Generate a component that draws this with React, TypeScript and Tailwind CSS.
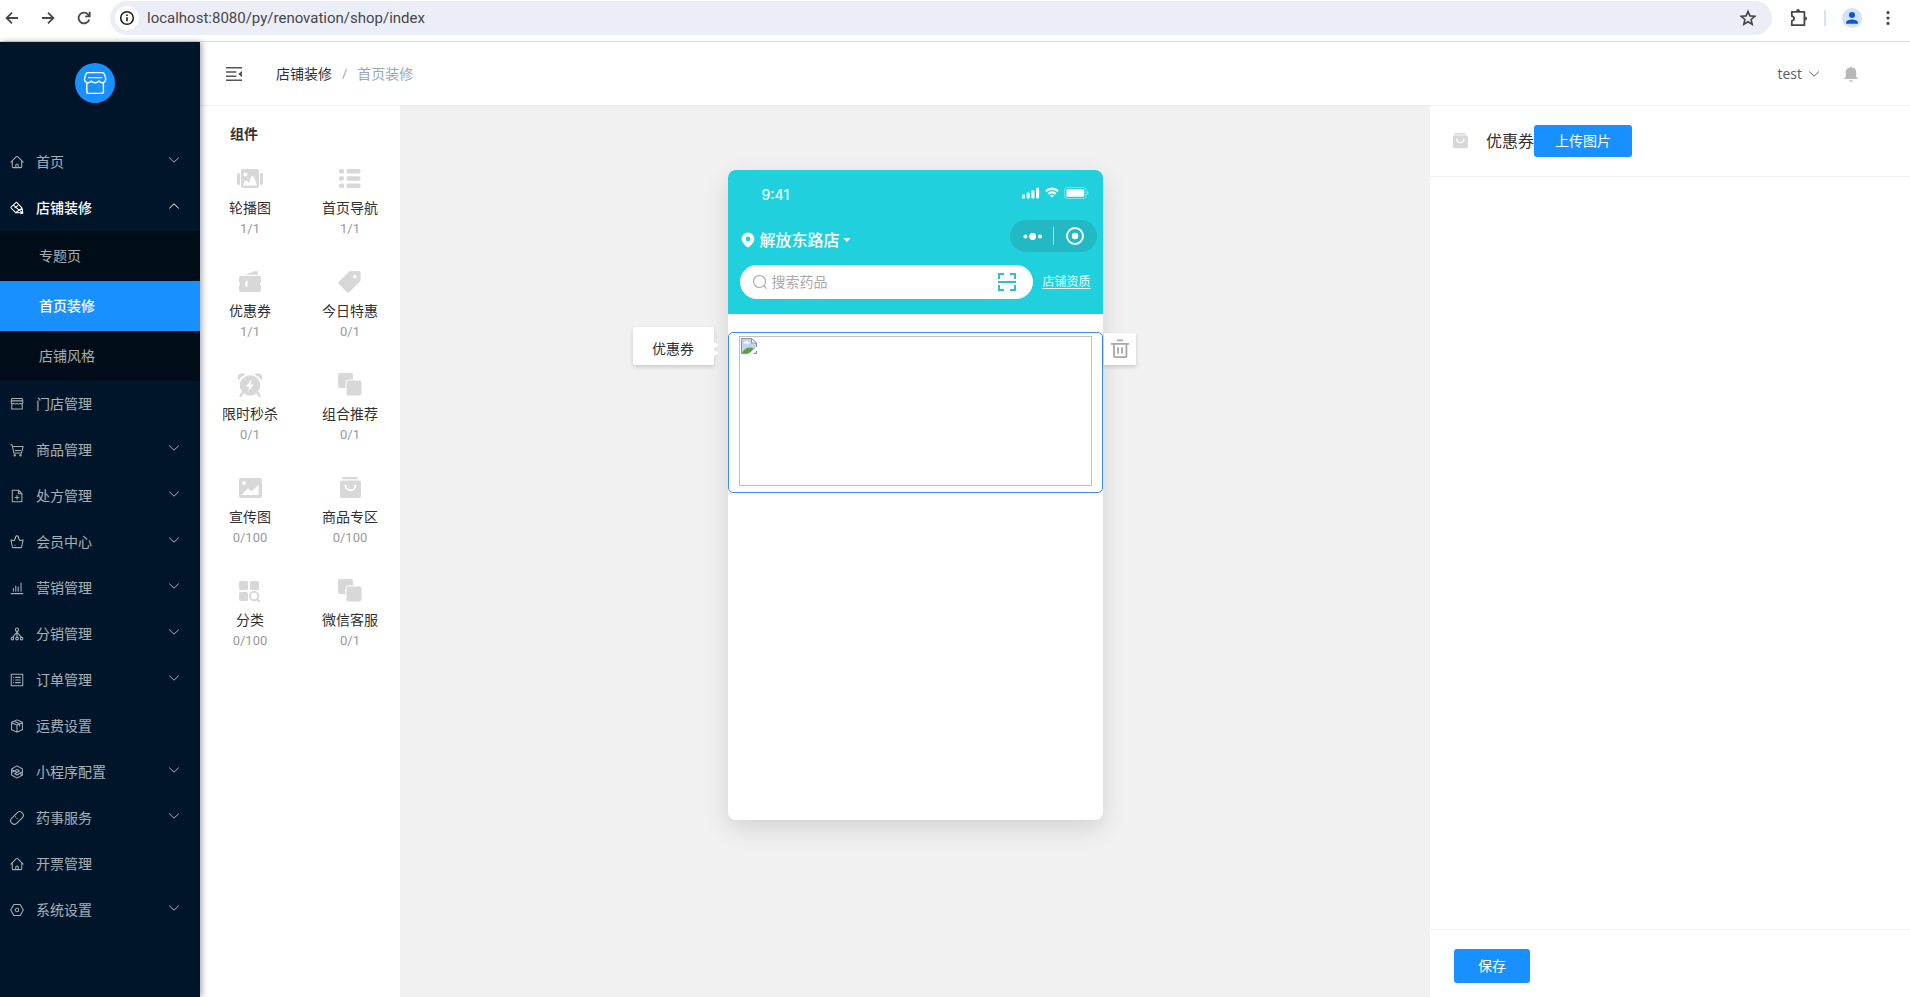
import type { ReactNode } from "react";
import clsx from "clsx";

interface IconProps {
  className?: string;
}

interface LineIconProps extends IconProps {
  children: ReactNode;
}

// 16x16 outline icon used across the sidebar
const LineIcon = ({ className, children }: LineIconProps) => (
  <svg
    viewBox="0 0 16 16"
    fill="none"
    stroke="currentColor"
    strokeWidth="1.2"
    strokeLinecap="round"
    strokeLinejoin="round"
    className={clsx("shrink-0", className ?? "size-[14px]")}
    aria-hidden="true"
  >
    {children}
  </svg>
);

const homeIcon = (
  <LineIcon>
    <path d="M1 8.2 6.9 2.1a1.5 1.5 0 0 1 2.2 0L15 8.2M2.6 7v6.4a1 1 0 0 0 1 1h8.8a1 1 0 0 0 1-1V7M6.6 14.2v-2.6a1.4 1.4 0 0 1 2.8 0v2.6" />
  </LineIcon>
);

const paintIcon = (
  <LineIcon>
    <path d="M7.4 1.4 1.4 6.6a1 1 0 0 0-.1 1.400l5 5.400 7.500-5.200-6.400-6.800ZM4 4.600l6.600 6.200M5.800 7.600l3-2.400M6.300 13.400h6.500M13.800 8.200l.9 5.600M12 11.400l2.700 2.600-2.200.4" />
  </LineIcon>
);

const storeIcon = (
  <LineIcon>
    <path d="M2.4 1.600h11.200M1.400 4.400h13.200M2.400 1.600 1.400 4.400v2.200c0 1.500 2 1.600 3 .6 1 1 2.600 1 3.600 0 1 1 2.600 1 3.600 0 1 1 3 .9 3-.6V4.400l-1-2.800M2 8.600v5.200h12V8.600" />
  </LineIcon>
);

const cartIcon = (
  <LineIcon>
    <path d="M.8 2h1.600l2 9.400h8.800L15 4H3M6 8.600h6" />
    <circle cx="5.4" cy="14" r=".8" />
    <circle cx="12" cy="14" r=".8" />
  </LineIcon>
);

const fileIcon = (
  <LineIcon>
    <path d="M2.6 1.4h7.2l3.800 3.800v9.400h-11V1.400ZM9.600 1.600v3.800h3.800M8 7.400v4.400M5.800 9.600h4.400" />
  </LineIcon>
);

const crownIcon = (
  <LineIcon>
    <path d="m1 5.600 3.600.8L6.400 3.600a1.800 1.800 0 1 1 3.200 0l1.800 2.800 3.600-.8-1.800 8.200a.8.800 0 0 1-.8.6H3.600a.8.800 0 0 1-.8-.6L1 5.600ZM5.600 11.400h.2" />
  </LineIcon>
);

const chartIcon = (
  <LineIcon>
    <path d="M1.200 14.400h13.600M3.800 11.600V8.400M6.600 11.600V5.600M9.400 11.600V6.800M12.600 11.600V2.400" />
  </LineIcon>
);

const networkIcon = (
  <LineIcon>
    <circle cx="8" cy="3" r="1.9" />
    <circle cx="2.8" cy="13.2" r="1.5" />
    <circle cx="8" cy="13.2" r="1.5" />
    <circle cx="13.2" cy="13.2" r="1.5" />
    <path d="M8 5v6.600M7.600 6.400 3.200 11.600M8.400 6.400l4.400 5.200" />
  </LineIcon>
);

const listIcon = (
  <LineIcon>
    <path d="M1.400 1.400h13.200v13.200H1.400zM6.400 5h5.400M6.400 8h5.400M6.400 11h5.400M4.200 5h.1M4.200 8h.1M4.200 11h.1" />
  </LineIcon>
);

const boxIcon = (
  <LineIcon>
    <path d="m8 1 6.200 2.800v8.400L8 15l-6.200-2.800V3.800L8 1ZM1.800 4.200 8 6.800l6.200-2.600M8 6.800V15M4.800 2.600l6.200 2.800v2.600" />
  </LineIcon>
);

const miniAppIcon = (
  <LineIcon>
    <path d="m8 1 6.200 3.500v7L8 15l-6.200-3.500v-7L8 1ZM2 8.600 8 5l2.800 1.800L5.400 10 8 11.400l6-3.600M5 6.600 8 8.200M2.200 5.400l3 1.400M11 9.400l2.600 1.400" />
  </LineIcon>
);

const pillIcon = (
  <LineIcon>
    <rect x="-.4" y="3.9" width="16.8" height="8.2" rx="4.1" transform="rotate(-45 8 8)" />
    <path d="m6.200 6.600.2.200M8 8.400l.2.200" />
  </LineIcon>
);

const settingIcon = (
  <LineIcon>
    <path d="M4.400 1.800h7.200L15.200 8l-3.600 6.200H4.400L.8 8l3.600-6.200Z" />
    <circle cx="8" cy="8" r="2" />
  </LineIcon>
);

const Chevron = ({ className }: IconProps) => (
  <svg viewBox="0 0 12 12" fill="none" stroke="currentColor" className={className} aria-hidden="true">
    <path d="m1.200 3.600 4.800 4.600 4.800-4.600" />
  </svg>
);

const CarouselIcon = () => (
  <svg viewBox="0 0 28 28" className="size-7" fill="currentColor" aria-hidden="true">
    <rect x="1" y="8" width="3" height="12" rx="1.4" />
    <rect x="24" y="8" width="3" height="12" rx="1.4" />
    <rect x="5" y="4" width="18" height="19" rx="2" />
    <circle cx="9.4" cy="9.6" r="2" fill="#fff" />
    <path d="M7 20.600c1-3.600 2.400-5.400 3.600-5.200 1.200.3 1.200 2.400 2.200 2.200 1.400-.4 1.600-6.600 3.400-6.600 1.800 0 2.800 4 4.800 9.600Z" fill="#fff" />
  </svg>
);

const NavIcon = () => (
  <svg viewBox="0 0 28 28" className="size-7" fill="currentColor" aria-hidden="true">
    <rect x="3" y="4" width="5" height="4.4" rx="1.6" />
    <rect x="3" y="11.3" width="5" height="4.4" rx="1.6" />
    <rect x="3" y="18.6" width="5" height="4.4" rx="1.6" />
    <rect x="10.5" y="4" width="14" height="4.4" rx="1.6" />
    <rect x="10.5" y="11.3" width="14" height="4.4" rx="1.6" />
    <rect x="10.5" y="18.6" width="14" height="4.4" rx="1.6" />
  </svg>
);

const CouponIcon = () => (
  <svg viewBox="0 0 28 28" className="size-7" fill="currentColor" aria-hidden="true">
    <path d="M8.400 6.800 19.600 3a1.600 1.600 0 0 1 2 1.200l.6 2.600H8.400Z" />
    <path d="M5 8h18a2 2 0 0 1 2 2v4a1.900 1.900 0 0 0 0 3.400V22a2 2 0 0 1-2 2H5a2 2 0 0 1-2-2v-4.600a1.900 1.900 0 0 0 0-3.400V10a2 2 0 0 1 2-2Z" />
    <rect x="9.4" y="12.8" width="2.2" height="6" rx="1" fill="#fff" />
  </svg>
);

const TagIcon = () => (
  <svg viewBox="0 0 28 28" className="size-7" fill="currentColor" aria-hidden="true">
    <path d="M14.600 3H23a1.600 1.600 0 0 1 1.600 1.600V12a2 2 0 0 1-.6 1.400L13.200 24.200a1.600 1.600 0 0 1-2.200 0L2.800 16a1.600 1.600 0 0 1 0-2.200L13.200 3.600a2 2 0 0 1 1.400-.6Z" />
    <circle cx="18.8" cy="8.6" r="1.9" fill="#fff" />
  </svg>
);

const AlarmIcon = () => (
  <svg viewBox="0 0 28 28" className="size-7" fill="currentColor" aria-hidden="true">
    <path d="M2.700 9.200a4.200 4.200 0 0 1 6.800-5.400A12 12 0 0 0 2.700 9.200ZM25.300 9.200a4.200 4.200 0 0 0-6.800-5.400 12 12 0 0 1 6.800 5.400Z" />
    <circle cx="14" cy="14.4" r="10.2" />
    <path d="m6.600 21.600-2 3.200M21.400 21.600l2 3.200" stroke="currentColor" strokeWidth="2.6" strokeLinecap="round" />
    <path d="M15.400 8.400 9.800 15.800h3.400l-1 4.800 5.600-7.200h-3.400l1-5Z" fill="#fff" />
  </svg>
);

const LayersIcon = () => (
  <svg viewBox="0 0 28 28" className="size-7" fill="currentColor" aria-hidden="true">
    <rect x="2" y="2" width="15" height="15" rx="2" />
    <rect x="10" y="9" width="16" height="16" rx="2.4" stroke="#fff" />
  </svg>
);

const PosterIcon = () => (
  <svg viewBox="0 0 28 28" className="size-7" fill="currentColor" aria-hidden="true">
    <rect x="3" y="4" width="23" height="20" rx="2" />
    <circle cx="8" cy="9" r="1.9" fill="#fff" />
    <path d="m6 20.600 6-6.400 3.600 3.400L22.600 10.400V20a1 1 0 0 1-1 1H6.200Z" fill="#fff" />
  </svg>
);

const BagIcon = ({ className }: IconProps) => (
  <svg viewBox="0 0 28 28" className={className ?? "size-7"} fill="currentColor" aria-hidden="true">
    <path d="M7.600 3h13a1.400 1.400 0 0 1 1.400 1.400v.8H6v-.8A1.400 1.400 0 0 1 7.600 3Z" />
    <rect x="4" y="6.4" width="21" height="17.6" rx="2" />
    <path d="M9.600 11.400a4.900 4.900 0 0 0 9.800 0" stroke="#fff" strokeWidth="2" strokeLinecap="round" fill="none" />
  </svg>
);

const CategoryIcon = () => (
  <svg viewBox="0 0 28 28" className="size-7" fill="currentColor" aria-hidden="true">
    <rect x="3" y="4" width="9" height="9" rx="1.6" />
    <rect x="14" y="4" width="9" height="9" rx="1.6" />
    <rect x="3" y="15" width="9" height="9" rx="1.6" />
    <circle cx="18.2" cy="19" r="4.2" fill="none" stroke="currentColor" strokeWidth="1.9" />
    <path d="m21.200 22.200 2.200 2.200" stroke="currentColor" strokeWidth="2" strokeLinecap="round" />
  </svg>
);

interface MenuItem {
  title: string;
  icon: ReactNode;
  expandable?: boolean;
  children?: string[];
}

const menu: MenuItem[] = [
  { title: "首页", icon: homeIcon, expandable: true },
  { title: "店铺装修", icon: paintIcon, expandable: true, children: ["专题页", "首页装修", "店铺风格"] },
  { title: "门店管理", icon: storeIcon },
  { title: "商品管理", icon: cartIcon, expandable: true },
  { title: "处方管理", icon: fileIcon, expandable: true },
  { title: "会员中心", icon: crownIcon, expandable: true },
  { title: "营销管理", icon: chartIcon, expandable: true },
  { title: "分销管理", icon: networkIcon, expandable: true },
  { title: "订单管理", icon: listIcon, expandable: true },
  { title: "运费设置", icon: boxIcon },
  { title: "小程序配置", icon: miniAppIcon, expandable: true },
  { title: "药事服务", icon: pillIcon, expandable: true },
  { title: "开票管理", icon: homeIcon },
  { title: "系统设置", icon: settingIcon, expandable: true },
];

const widgets = [
  { name: "轮播图", count: "1/1", icon: <CarouselIcon /> },
  { name: "首页导航", count: "1/1", icon: <NavIcon /> },
  { name: "优惠券", count: "1/1", icon: <CouponIcon /> },
  { name: "今日特惠", count: "0/1", icon: <TagIcon /> },
  { name: "限时秒杀", count: "0/1", icon: <AlarmIcon /> },
  { name: "组合推荐", count: "0/1", icon: <LayersIcon /> },
  { name: "宣传图", count: "0/100", icon: <PosterIcon /> },
  { name: "商品专区", count: "0/100", icon: <BagIcon /> },
  { name: "分类", count: "0/100", icon: <CategoryIcon /> },
  { name: "微信客服", count: "0/1", icon: <LayersIcon /> },
];

const BrowserBar = () => (
  <div className="flex h-[42px] shrink-0 items-start border-b border-[#dcdcdc] bg-white pt-px text-[#474747]">
    <div className="flex h-[34px] items-center gap-4 pl-0.5 pr-4">
      <button type="button" aria-label="Back" className="flex size-5 items-center justify-center">
        <svg viewBox="0 0 14 14" className="size-[14px]" fill="none" stroke="currentColor" strokeWidth="1.8">
          <path d="M13 7H2M7 1.600 1.600 7 7 12.400" />
        </svg>
      </button>
      <button type="button" aria-label="Forward" className="flex size-5 items-center justify-center">
        <svg viewBox="0 0 14 14" className="size-[14px]" fill="none" stroke="currentColor" strokeWidth="1.8">
          <path d="M1 7h11M7 1.600 12.400 7 7 12.400" />
        </svg>
      </button>
      <button type="button" aria-label="Reload" className="flex size-5 items-center justify-center">
        <svg viewBox="0 0 14 14" className="size-[14px]" fill="none" stroke="currentColor" strokeWidth="1.8">
          <path d="M12.200 8.400A5.400 5.400 0 1 1 11 3.400l1.600 1.600" />
          <path d="M12.700.8v4.600H8.200" />
        </svg>
      </button>
    </div>
    <div className="flex h-[34px] flex-1 items-center rounded-full bg-[#ebeef7] pl-[5px] pr-[14px]">
      <span className="flex size-6 items-center justify-center rounded-full bg-white">
        <svg viewBox="0 0 16 16" className="size-4" fill="none" stroke="#1f1f1f" strokeWidth="1.6" aria-hidden="true">
          <circle cx="8" cy="8" r="6.3" />
          <path d="M8 7.200v4M8 4.400v1.600" />
        </svg>
      </span>
      <input
        aria-label="Address"
        defaultValue="localhost:8080/py/renovation/shop/index"
        className="ml-2 h-6 flex-1 bg-transparent font-['Roboto',sans-serif] text-[15px] leading-6 text-[#474747] outline-none"
      />
      <button type="button" aria-label="Bookmark" className="flex size-5 items-center justify-center">
        <svg viewBox="0 0 18 18" className="size-[18px]" fill="none" stroke="currentColor" strokeWidth="1.6">
          <path d="m9 2.400 1.900 4.500 4.900.4-3.700 3.200 1.100 4.800L9 12.700l-4.200 2.600 1.100-4.800-3.700-3.200 4.900-.4L9 2.400Z" />
        </svg>
      </button>
    </div>
    <div className="flex h-[34px] items-center pl-[17px] pr-3">
      <button type="button" aria-label="Extensions" className="flex size-5 items-center justify-center">
        <svg viewBox="0 0 20 20" className="size-5" fill="none" stroke="currentColor" strokeWidth="1.8">
          <path d="M2.800 3.800h12.600v13.400H2.800v-4.400c3-.4 3-4.200 0-4.600V3.800Z" strokeLinejoin="round" />
          <path d="M7.200 3a1.900 1.900 0 0 1 3.800 0ZM16.200 8.600a1.900 1.900 0 0 1 0 3.800Z" fill="currentColor" stroke="none" />
        </svg>
      </button>
      <span className="ml-[15px] h-4 w-0.5 bg-[#d3e3fd]" />
      <button type="button" aria-label="Profile" className="ml-4 size-5">
        <svg viewBox="0 0 20 20" className="size-5">
          <circle cx="10" cy="10" r="10" fill="#d3e3fd" />
          <circle cx="10" cy="7" r="3" fill="#0b57d0" />
          <path d="M4 15.800v-1.200c0-2 3.600-3.200 6-3.200s6 1.200 6 3.200v1.200H4Z" fill="#0b57d0" />
        </svg>
      </button>
      <button type="button" aria-label="Menu" className="ml-4 flex size-5 items-center justify-center">
        <svg viewBox="0 0 4 16" className="h-4 w-1" fill="currentColor">
          <circle cx="2" cy="2.6" r="1.6" />
          <circle cx="2" cy="8" r="1.6" />
          <circle cx="2" cy="13.4" r="1.6" />
        </svg>
      </button>
    </div>
  </div>
);

const Sidebar = () => (
  <aside className="z-10 w-[200px] shrink-0 overflow-hidden bg-[#001529] shadow-[2px_0_6px_rgba(0,21,41,0.35)]">
    <div className="flex h-[97px] pl-[75px] pt-[21px]">
      <svg viewBox="0 0 40 40" className="size-10" fill="none" stroke="#fff" strokeWidth="1.4" strokeLinejoin="round">
        <circle cx="20" cy="20" r="20" fill="#1890ff" stroke="none" />
        <path d="M13 9.600h14c1.400 0 2.200.7 2.600 2l.9 3.200c.7 2.900-.8 5-3.100 5-1.500 0-2.700-.7-3.500-1.800-.9 1.200-2.200 1.800-3.700 1.800s-2.900-.6-3.800-1.800c-.8 1.100-2 1.800-3.500 1.800-2.400 0-4-2.200-3.200-5l1-3.200c.4-1.300 1-2 2.300-2Z" />
        <path d="M13.600 14.600h13M11.800 20.400v8a2 2 0 0 0 2 2h12.600a2 2 0 0 0 2-2v-8" strokeLinecap="round" />
      </svg>
    </div>
    <nav className="text-sm text-white/65">
      {menu.map((item) => (
        <div key={item.title}>
          <button
            type="button"
            className={clsx(
              "flex h-[46px] w-full items-center gap-3 pl-[10px] pr-5 text-left",
              item.children && "font-medium text-white",
            )}
          >
            {item.icon}
            <span className="flex-1">{item.title}</span>
            {item.expandable && (
              <Chevron className={clsx("mb-1 size-3", item.children && "rotate-180")} />
            )}
          </button>
          {item.children && (
            <div className="bg-[#000c17]">
              {item.children.map((child) => (
                <a
                  key={child}
                  href="#"
                  className={clsx(
                    "flex h-[50px] items-center pl-[39px]",
                    child === "首页装修" && "bg-[#1890ff] font-medium text-white",
                  )}
                >
                  {child}
                </a>
              ))}
            </div>
          )}
        </div>
      ))}
    </nav>
  </aside>
);

const TopBar = () => (
  <header className="flex h-16 shrink-0 items-center border-b border-[#f0f0f0] bg-white pl-[26px] pr-[52px] text-sm">
    <button type="button" aria-label="收起菜单" className="text-[#555]">
      <svg viewBox="0 0 16 14" className="h-[14px] w-4" fill="none" stroke="currentColor" strokeWidth="1.4">
        <path d="M0 .8h16M0 5h10.400M0 9.200h10.400M0 13.300h16" />
        <path d="M16 4v6.200L12.200 7 16 4Z" fill="currentColor" stroke="none" />
      </svg>
    </button>
    <nav className="ml-[34px] flex items-center gap-[10px]">
      <a href="#" className="text-[#303133]">店铺装修</a>
      <span className="text-[#a0a8b8]">/</span>
      <span className="text-[#97a8be]">首页装修</span>
    </nav>
    <button type="button" className="ml-auto flex items-center gap-1.5 text-[#5a5e66]">
      test
      <Chevron className="size-3" />
    </button>
    <button type="button" aria-label="通知" className="ml-6 text-[#b8b8b8]">
      <svg viewBox="0 0 14 16" className="h-4 w-[14px]" fill="currentColor">
        <path d="M6.200 1.400a.8.800 0 0 1 1.600 0A4.800 4.800 0 0 1 12.200 6v4.800l1.400 1.400v.9H.4v-.9l1.400-1.400V6a4.800 4.800 0 0 1 4.400-4.600ZM5.200 14.200h3.600a1.800 1.600 0 0 1-3.600 0Z" />
      </svg>
    </button>
  </header>
);

const WidgetPanel = () => (
  <section className="w-[200px] shrink-0 bg-white pt-[18px] text-center">
    <h2 className="pl-[30px] text-left text-sm font-bold text-[#303133]">组件</h2>
    <div className="mt-[21px] grid grid-cols-2 gap-y-[26px]">
      {widgets.map((widget) => (
        <button key={widget.name} type="button" className="flex h-[77px] flex-col items-center">
          <span className="text-[#d8d8d8]">{widget.icon}</span>
          <span className="mt-[5px] text-sm text-[#303133]">{widget.name}</span>
          <span className="mt-px font-['Roboto',sans-serif] text-[13px] leading-5 text-[#999]">{widget.count}</span>
        </button>
      ))}
    </div>
  </section>
);

const PhoneHeader = () => (
  <div className="h-36 rounded-t-lg bg-[#20d1dd] text-white">
    <div className="flex h-[50px] items-center justify-between pl-[34px] pr-[14px]">
      <span className="font-['Inter',sans-serif] text-sm font-medium">9:41</span>
      <svg viewBox="0 0 67 12" className="mb-1 h-3 w-[67px]" fill="currentColor" aria-hidden="true">
        <rect x="0" y="7.4" width="3" height="4" rx=".8" />
        <rect x="4.7" y="5.6" width="3" height="5.8" rx=".8" />
        <rect x="9.4" y="3.2" width="3" height="8.2" rx=".8" />
        <rect x="14.1" y=".8" width="3" height="10.6" rx=".8" />
        <path d="M30 2.900c2 0 3.900.8 5.300 2.200l1.500-1.600A9.600 9.600 0 0 0 30 .6a9.600 9.600 0 0 0-6.800 2.900l1.500 1.600A7.500 7.500 0 0 1 30 2.900Zm0 3.600c1.100 0 2.100.4 2.900 1.200l1.500-1.600A6.300 6.300 0 0 0 30 4.300c-1.700 0-3.200.7-4.400 1.800l1.500 1.600c.8-.8 1.800-1.200 2.900-1.200Zm2 2.100a3 3 0 0 0-4 0l2 2.200 2-2.200Z" />
        <rect x="42.5" y=".5" width="21.5" height="11" rx="2.6" fill="none" stroke="currentColor" opacity=".4" />
        <rect x="44.4" y="2.3" width="17.8" height="7.4" rx="1.2" />
        <path d="M65.200 4v4c.8-.3 1.300-1.100 1.300-2s-.5-1.700-1.300-2Z" opacity=".4" />
      </svg>
    </div>
    <div className="flex h-8 items-center justify-between pl-[13px] pr-1.5">
      <button type="button" className="flex items-center pt-2">
        <svg viewBox="0 0 14 16" className="h-4 w-[14px]" fill="currentColor" aria-hidden="true">
          <path fillRule="evenodd" d="M7 .6a6.300 6.300 0 0 1 6.300 6.300c0 3.500-3.100 6-5.400 8.100a1.300 1.300 0 0 1-1.800 0C3.800 12.900.7 10.400.7 6.900A6.300 6.300 0 0 1 7 .6Zm0 4a2.400 2.400 0 1 0 0 4.800 2.400 2.400 0 0 0 0-4.800Z" />
        </svg>
        <span className="ml-[5px] text-base font-medium">解放东路店</span>
        <svg viewBox="0 0 8 4" className="ml-[3px] h-1 w-2" fill="currentColor" aria-hidden="true">
          <path d="M.4 0h7.200L4 4 .4 0Z" />
        </svg>
      </button>
      <svg viewBox="0 0 87 32" className="h-8 w-[87px]" fill="#fff" aria-hidden="true">
        <rect width="87" height="32" rx="16" fill="#22b9c4" />
        <circle cx="15.5" cy="16.5" r="2" />
        <circle cx="22.7" cy="16.5" r="3.4" />
        <circle cx="30" cy="16.5" r="2" />
        <path d="M43 6.500h1v18.500h-1z" opacity=".6" />
        <circle cx="65" cy="16" r="8" fill="none" stroke="#fff" strokeWidth="1.9" />
        <circle cx="65" cy="16" r="3.2" />
      </svg>
    </div>
    <div className="mt-[13px] flex items-center pl-3 pr-3">
      <label className="flex h-[34px] flex-1 items-center rounded-full bg-white pl-3 pr-[17px]">
        <svg viewBox="0 0 16 16" className="size-4" fill="none" stroke="#aaa" strokeWidth="1.1" aria-hidden="true">
          <circle cx="7.5" cy="7.5" r="6" />
          <path d="m12 12 2.600 2.600" />
        </svg>
        <input
          type="search"
          aria-label="搜索药品"
          placeholder="搜索药品"
          className="ml-1 w-0 flex-1 bg-transparent text-sm outline-none placeholder:text-[#aaa]"
        />
        <svg viewBox="0 0 18 18" className="size-[18px]" fill="none" stroke="#30bfcb" strokeWidth="2" aria-hidden="true">
          <path d="M1 6V1h5M12 1h5v5M17 12v5h-5M6 17H1v-5M0 9h18" />
        </svg>
      </label>
      <a href="#" className="ml-[9px] text-xs text-white/90 underline underline-offset-2">店铺资质</a>
    </div>
  </div>
);

const Phone = () => (
  <div className="relative h-[650px] w-[375px] rounded-lg bg-white shadow-[0_8px_24px_rgba(0,0,0,0.13)]">
    <PhoneHeader />
    <div className="relative mt-[18px] h-[161px] rounded-[5px] border border-[#3a8fdc] px-[10px] pb-1.5 pt-[3px]">
      <div role="img" aria-label="优惠券" className="h-full border border-[#c0c0c0] p-px">
        <svg viewBox="0 0 16 16" className="size-4" aria-hidden="true">
          <path d="M.5.5h10L15.500 5v10.500H.5V.5Z" fill="#c3d4f3" />
          <path d="M2.400 5.600a1.600 1.600 0 0 1 1.700-1.500 2 2 0 0 1 3.600.4c1 0 1.300.6 1.300 1.100H2.400Z" fill="#fff" />
          <path d="M1 15.200c1.200-3.200 4-5.200 7.400-5.600 1.600-.1 3.600.4 4.600 1L8.600 15.200H1Z" fill="#57a83c" />
          <path d="M.5 15.500V.5h10L15.500 5v4M.5 15.500H7M12.500 15.500h3V13" fill="none" stroke="#8f9399" />
          <path d="M10.500.5V5h5L10.500.5Z" fill="#fff" stroke="#8f9399" />
          <path d="M16 8.400 7.600 16h4.200L16 12.200V8.400Z" fill="#fff" />
        </svg>
      </div>
      {/* name tag and delete handle of the selected block */}
      <div className="absolute -left-24 -top-1.5 flex h-[38px] w-[81px] items-center justify-center rounded-xs bg-white pt-1.5 text-sm text-[#303133] shadow-[0_2px_4px_rgba(0,0,0,0.16)]">
        优惠券
        <svg viewBox="0 0 5 14" className="absolute left-full h-[14px] w-[5px]" fill="#fff" aria-hidden="true">
          <path d="M0 0l5 3-5 3zM0 8l5 3-5 3z" />
        </svg>
      </div>
      <button
        type="button"
        aria-label="删除"
        className="absolute left-full top-0 ml-0.5 flex h-8 w-8 items-center justify-center bg-white shadow-[0_2px_4px_rgba(0,0,0,0.16)]"
      >
        <svg viewBox="0 0 20 20" className="size-5" fill="none" stroke="#a8a8a8" strokeWidth="1.8">
          <path d="M7 1.400h6M1 4.800h18M4 5v12.200a1 1 0 0 0 1 1h10.400a1 1 0 0 0 1-1V5M8 8.200v6.400M12 8.200v6.400" />
        </svg>
      </button>
    </div>
  </div>
);

const SettingsPanel = () => (
  <section className="flex w-[480px] shrink-0 flex-col bg-white">
    <div className="flex h-[71px] items-center border-b border-[#f0f0f0] pl-5">
      <BagIcon className="size-5 text-[#d8d8d8]" />
      <span className="ml-4 text-base text-[#303133]">优惠券</span>
      <button type="button" className="h-8 w-[98px] rounded-[3px] bg-[#1890ff] text-sm text-white">
        上传图片
      </button>
    </div>
    <div className="flex-1" />
    <div className="h-[68px] border-t border-[#f0f0f0] pl-6 pt-[19px]">
      <button type="button" className="h-[34px] w-[76px] rounded-[3px] bg-[#1890ff] text-sm text-white">
        保存
      </button>
    </div>
  </section>
);

export default function App() {
  return (
    <div className="flex min-h-screen flex-col bg-white font-['Open_Sans','Noto_Sans_CJK_SC',sans-serif]">
      <BrowserBar />
      <div className="flex flex-1">
        <Sidebar />
        <div className="flex min-w-0 flex-1 flex-col">
          <TopBar />
          <div className="flex flex-1">
            <WidgetPanel />
            <main className="flex flex-1 justify-center bg-[#f1f1f1] pt-16">
              <Phone />
            </main>
            <SettingsPanel />
          </div>
        </div>
      </div>
    </div>
  );
}
